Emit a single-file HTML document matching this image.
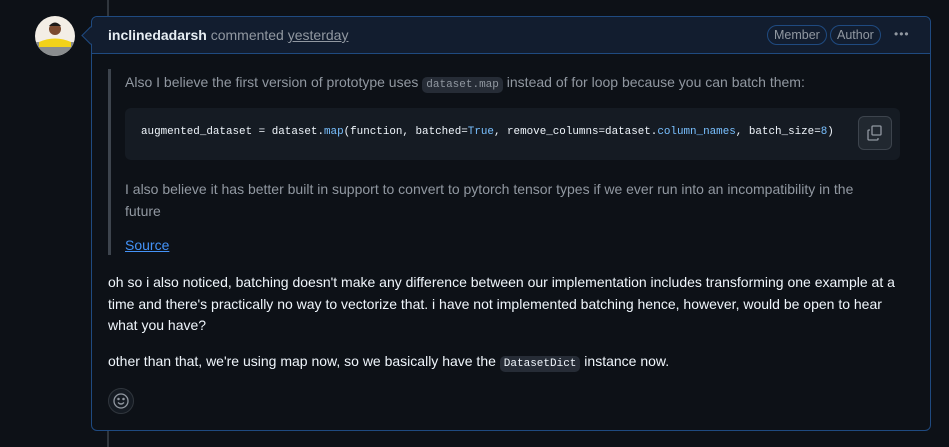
<!DOCTYPE html>
<html><head><style>
body{margin:0;width:949px;height:447px;background:#0d1117;font-family:"Liberation Sans",sans-serif;font-size:14px;color:#e6edf3;position:relative;overflow:hidden}
.tl{position:absolute;left:107px;top:0;width:2px;height:447px;background:#30363d}
.av{position:absolute;left:35px;top:16px;width:40px;height:40px;border-radius:50%;background:#f3eee6;overflow:hidden}
.box{position:absolute;left:91px;top:16px;width:838px;height:413px;border:1px solid #1f4a80;border-radius:6px;background:#0d1117}
.hd{height:36px;background:#121d2f;border-bottom:1px solid #1f4a80;border-radius:6px 6px 0 0;position:relative}
.arrow{position:absolute;left:-8px;top:12px;width:12px;height:12px;background:#121d2f;border-left:1px solid #1f4a80;border-bottom:1px solid #1f4a80;transform:rotate(45deg)}
.hd .t{position:absolute;left:16px;top:10px;color:#9198a1}
.hd b{color:#e6edf3}
.hd u{text-decoration-color:#9198a1}
.lab{position:absolute;top:8px;height:18px;border:1px solid #1f4a80;border-radius:10px;color:#9198a1;font-size:12.5px;line-height:18px;padding:0 6px}
.dots{position:absolute;left:802px;top:10px;color:#9198a1;font-size:12px;letter-spacing:1px}
.bq{position:absolute;left:16px;top:52px;width:3px;height:186px;background:#3d444d}
.p{position:absolute;left:33px;color:#9198a1;white-space:nowrap}
code{font-family:"Liberation Mono",monospace;font-size:11px;background:#262c36;border-radius:5px;padding:2px 4px}
.code{position:absolute;left:33px;top:91px;width:775px;height:52px;background:#151b23;border-radius:6px}
.code pre{margin:0;position:absolute;left:16px;top:18px;font-family:"Liberation Mono",monospace;font-size:10.9px;color:#f0f6fc}
.f{color:#79c0ff}
.cp{position:absolute;left:733px;top:8px;width:32px;height:32px;border:1px solid #3d444d;border-radius:6px;background:#212830}
.q{position:absolute;left:16px;color:#f0f6fc;width:800px;line-height:21.5px}
.em{position:absolute;left:16px;top:371px;width:24px;height:24px;border:1px solid #30363d;border-radius:50%;background:#151b23}
</style></head><body>
<div class="tl"></div>
<div class="av"><svg width="40" height="40"><rect x="0" y="26" width="40" height="14" fill="#8a8d8f"/><path d="M4 26 Q20 19 36 26 L36 31 L4 31Z" fill="#f2d21a"/><circle cx="20" cy="13" r="6" fill="#7b4a2f"/><path d="M14 10 Q20 3 26 10Z" fill="#1d1a18"/></svg></div>
<div class="box">
<div class="hd"><div class="arrow"></div>
<div class="t"><b>inclinedadarsh</b> commented <u>yesterday</u></div>
<div class="lab" style="left:675px">Member</div><div class="lab" style="left:738px">Author</div>
<div class="dots">•••</div></div>
<div class="bq"></div>
<div class="p" style="top:57px">Also I believe the first version of prototype uses <code style="color:#9198a1">dataset.map</code> instead of for loop because you can batch them:</div>
<div class="code"><pre>augmented_dataset = dataset.<span class="f">map</span>(function, batched=<span class="f">True</span>, remove_columns=dataset.<span class="f">column_names</span>, batch_size=<span class="f">8</span>)</pre>
<div class="cp"><svg width="32" height="32" viewBox="0 0 32 32" fill="none" stroke="#9198a1" stroke-width="1.3"><rect x="13" y="9" width="9" height="9" rx="1"/><path d="M11 13h-1a1 1 0 0 0-1 1v8a1 1 0 0 0 1 1h8a1 1 0 0 0 1-1v-1"/></svg></div></div>
<div class="p" style="top:162px;line-height:21.5px;white-space:normal;width:760px">I also believe it has better built in support to convert to pytorch tensor types if we ever run into an incompatibility in the future</div>
<div class="p" style="top:220px;color:#4493f8;text-decoration:underline">Source</div>
<div class="q" style="top:255px">oh so i also noticed, batching doesn't make any difference between our implementation includes transforming one example at a time and there's practically no way to vectorize that. i have not implemented batching hence, however, would be open to hear what you have?</div>
<div class="q" style="top:334px">other than that, we're using map now, so we basically have the <code>DatasetDict</code> instance now.</div>
<div class="em"><svg width="24" height="24" viewBox="0 0 24 24" fill="none" stroke="#9198a1" stroke-width="1.3"><circle cx="12" cy="12" r="7"/><path d="M9 13.5q3 3 6 0"/><circle cx="9.5" cy="10" r=".6" fill="#9198a1"/><circle cx="14.5" cy="10" r=".6" fill="#9198a1"/></svg></div>
</div>
</body></html>
